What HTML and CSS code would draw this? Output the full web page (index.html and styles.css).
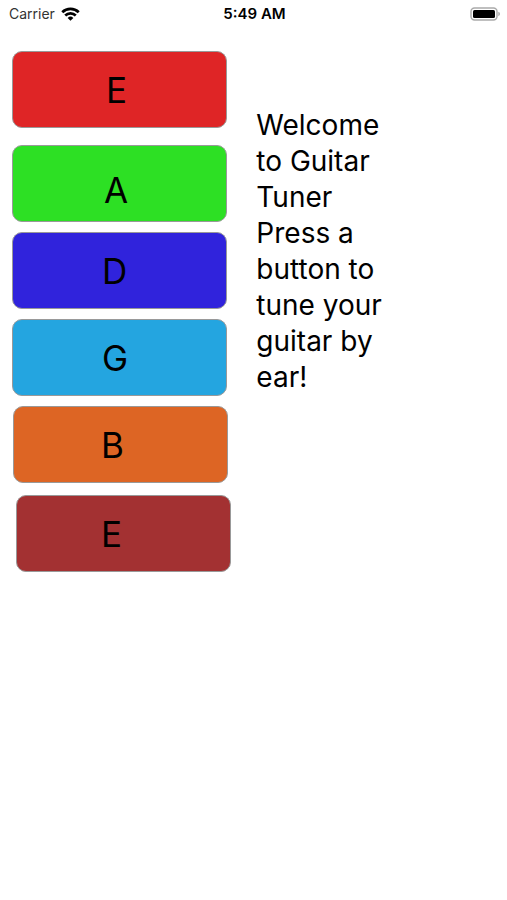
FILE: index.html
```html
<!DOCTYPE html>
<html lang="en">
<head>
<meta charset="UTF-8">
<meta name="viewport" content="width=device-width, initial-scale=1.0">
<title>Guitar Tuner</title>
<link rel="stylesheet" href="styles.css">
</head>
<body>
    <header class="status-bar">
        <div class="carrier">
            <span>Carrier</span>
            <svg class="wifi" viewBox="0 0 18 13" aria-hidden="true">
                <path d="M1.2 4.9a11.2 11.2 0 0 1 15.6 0" />
                <path d="M4 7.9a7.2 7.2 0 0 1 10 0" />
                <path class="dot" d="M6.3 10.2a4 4 0 0 1 5.4 0L9 13z" />
            </svg>
        </div>
        <div class="clock">5:49 AM</div>
        <div class="power">
            <svg class="battery" viewBox="0 0 30 14" aria-hidden="true">
                <rect class="shell" x="1" y="1" width="26" height="12" rx="3.5" />
                <rect class="charge" x="3" y="3" width="22" height="8" rx="1.5" />
                <path class="cap" d="M28.3 4.8q1.7.6 1.7 2.2t-1.7 2.2z" />
            </svg>
        </div>
    </header>

    <main class="tuner">
        <div class="strings">
            <button type="button" class="string low-e">E</button>
            <button type="button" class="string a">A</button>
            <button type="button" class="string d">D</button>
            <button type="button" class="string g">G</button>
            <button type="button" class="string b">B</button>
            <button type="button" class="string high-e">E</button>
        </div>
        <p class="welcome">Welcome to Guitar Tuner<br>Press a button to tune your guitar by ear!</p>
    </main>
</body>
</html>
```

FILE: styles.css
```css
* {
  box-sizing: border-box;
}
body {
  font-family: Inter, "Liberation Sans", sans-serif;
  margin: 0;
  background-color: #fff;
  color: #000;
}
.status-bar {
  display: grid;
  grid-template-columns: 1fr auto 1fr;
  align-items: center;
  height: 27px;
  padding: 0 7px 0 9px;
  font-size: 14px;
}
.carrier {
  display: flex;
  align-items: center;
  gap: 6px;
  color: #333;
}
.wifi {
  width: 19px;
  height: 14px;
  fill: none;
  stroke: #000;
  stroke-width: 2.6;
}
.wifi .dot {
  fill: #000;
  stroke: none;
}
.clock {
  font-size: 15px;
  font-weight: 600;
}
.power {
  display: flex;
  justify-content: flex-end;
}
.battery {
  width: 30px;
  height: 14px;
}
.battery .shell {
  fill: #fff;
  stroke: #aaa;
  stroke-width: 1.4;
}
.battery .cap {
  fill: #aaa;
}
.tuner {
  display: grid;
  grid-template-columns: 45% 1fr;
  column-gap: 27px;
  padding: 24px 12px;
}
.strings {
  display: flex;
  flex-direction: column;
  gap: 10px;
}
.string {
  width: 215px;
  max-width: 100%;
  height: 77px;
  padding: 0 0 0 89px;
  border: 1px solid #999;
  border-radius: 10px;
  color: #000;
  font-family: inherit;
  font-size: 35px;
  line-height: 42px;
  text-align: left;
  cursor: pointer;
}
.low-e {
  margin-bottom: 7px;
  padding-left: 93px;
  background-color: #df2526;
}
.a {
  padding-top: 12px;
  padding-left: 91px;
  background-color: #2de024;
}
.d {
  background-color: #3023dc;
}
.g {
  background-color: #24a5e0;
}
.b {
  margin-left: 1px;
  padding-left: 87px;
  background-color: #dd6524;
}
.high-e {
  margin-top: 2px;
  margin-left: 4px;
  padding-left: 84px;
  background-color: #a33132;
}
.welcome {
  max-width: 136px;
  margin: 56px 0 0;
  font-size: 28px;
  line-height: 36px;
}
```
